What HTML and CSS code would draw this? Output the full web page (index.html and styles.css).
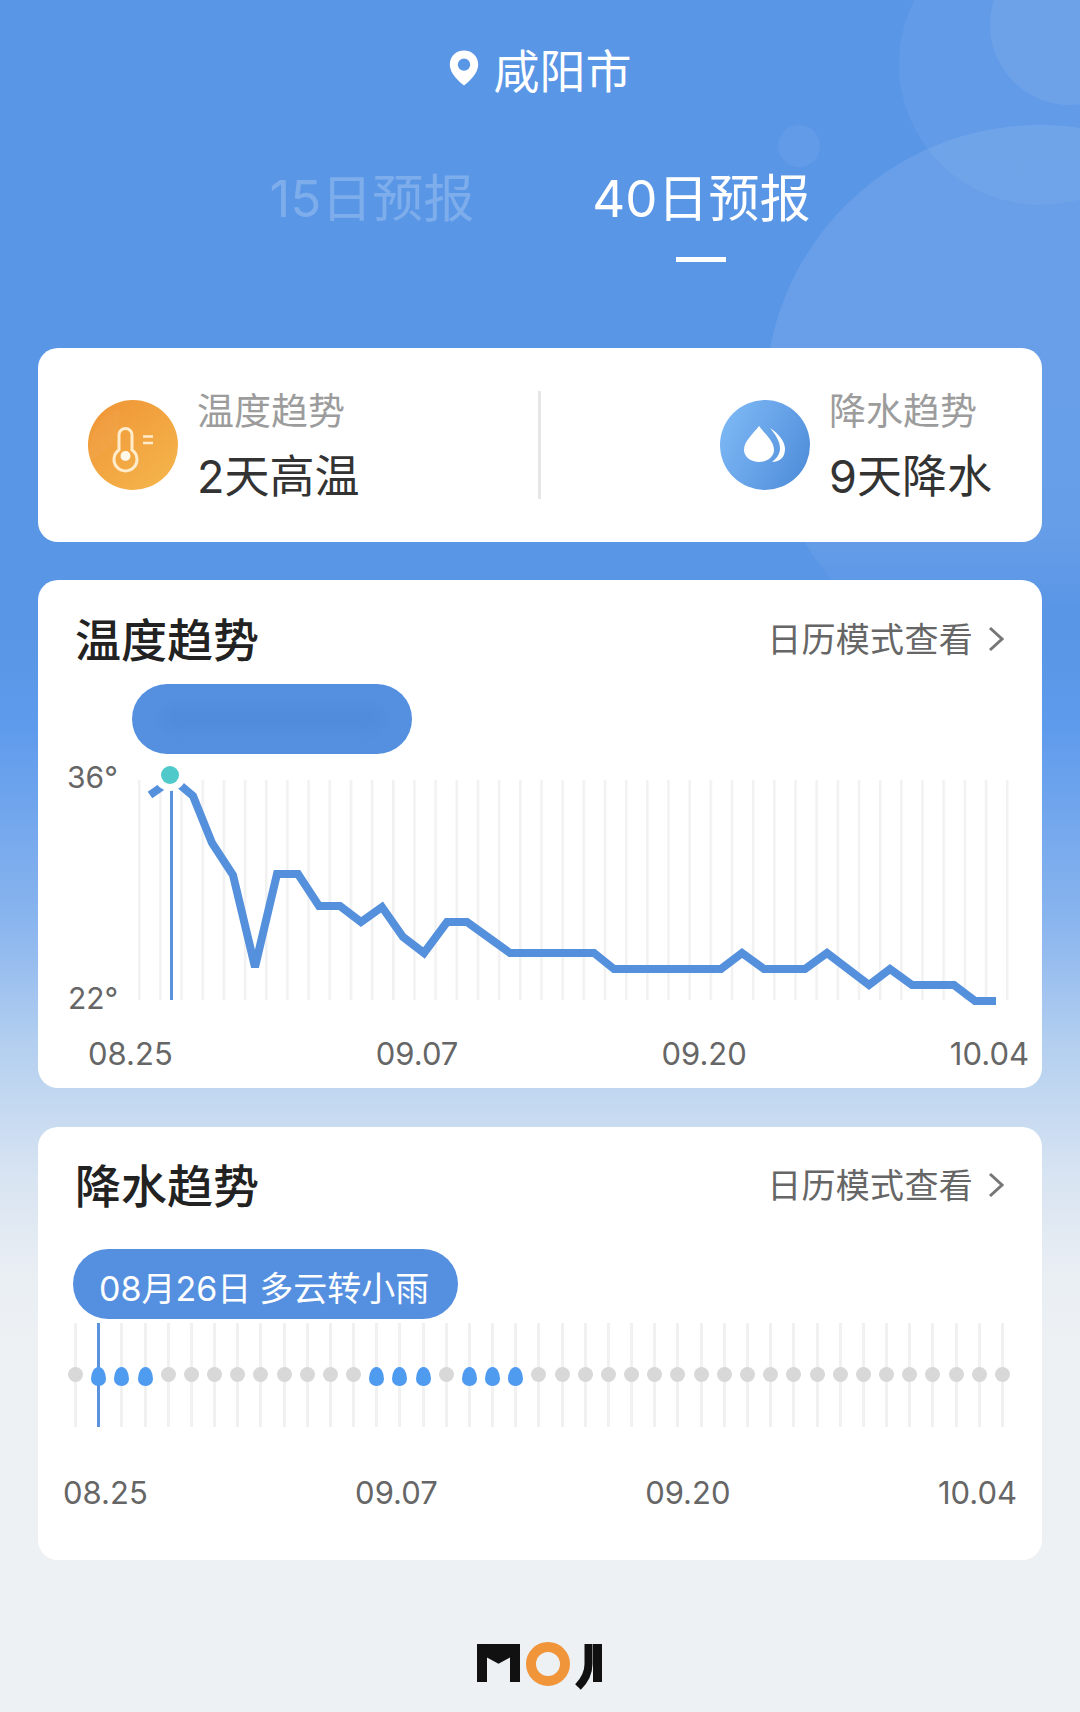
FILE: index.html
```html
<!DOCTYPE html>
<html lang="zh-CN">
<head>
  <meta charset="UTF-8" />
  <meta name="viewport" content="width=device-width, initial-scale=1.0"/>
  <title>40日预报</title>
  <link rel="stylesheet" href="styles.css">
</head>
<body>
  <div class="page">
    <svg class="bubbles" width="1080" height="700" viewBox="0 0 1080 700">
      <defs>
        <linearGradient id="bubble-fade" x1="0" y1="125" x2="0" y2="675" gradientUnits="userSpaceOnUse">
          <stop offset="0" stop-color="#fff" stop-opacity="0.09"/>
          <stop offset="0.72" stop-color="#fff" stop-opacity="0.08"/>
          <stop offset="0.88" stop-color="#fff" stop-opacity="0"/>
        </linearGradient>
      </defs>
      <circle cx="1040" cy="64" r="141" fill="#fff" opacity="0.05"/>
      <circle cx="1070" cy="25" r="80" fill="#fff" opacity="0.07"/>
      <circle cx="799" cy="146" r="21" fill="#fff" opacity="0.05"/>
      <circle cx="1040" cy="400" r="275" fill="url(#bubble-fade)"/>
    </svg>

    <div class="city">
      <svg class="pin" width="30" height="36" viewBox="0 0 30 36">
        <path fill-rule="evenodd" fill="#fff" d="M15 0.5C7 0.5 0.8 6.6 0.8 14.4 0.8 23.4 9.6 31 15 35.5 20.4 31 29.2 23.4 29.2 14.4 29.2 6.6 23 0.5 15 0.5ZM15 8.4a6.2 6.2 0 1 1 0 12.4a6.2 6.2 0 1 1 0-12.4Z"/>
      </svg>
      <span>咸阳市</span>
    </div>

    <div class="tabs">
      <div class="tab">15日预报</div>
      <div class="tab active">40日预报</div>
    </div>

    <div class="card summary">
      <div class="summary-item">
        <svg class="summary-icon" width="90" height="90" viewBox="0 0 90 90">
          <defs>
            <linearGradient id="hot" x1="0.1" y1="0" x2="0.9" y2="1">
              <stop offset="0" stop-color="#ef9536"/>
              <stop offset="1" stop-color="#f5b64c"/>
            </linearGradient>
          </defs>
          <circle cx="45" cy="45" r="45" fill="url(#hot)"/>
          <path d="M31 8A45 45 0 0 0 3 60C20 50 35 40 31 8Z" fill="#fff" opacity="0.04"/>
          <path fill="none" stroke="#ffeccb" stroke-width="3" d="M31 50V35a6.5 6.5 0 0 1 13 0V50a11.5 11.5 0 1 1-13 0Z"/>
          <circle cx="37.500" cy="56" r="5" fill="#fff7e8"/>
          <path stroke="#ffeccb" stroke-width="2.500" d="M55 36.500H65M55 43H65"/>
        </svg>
        <div class="summary-text">
          <div class="summary-label">温度趋势</div>
          <div class="summary-value">2天高温</div>
        </div>
      </div>
      <div class="summary-divider"></div>
      <div class="summary-item">
        <svg class="summary-icon" width="90" height="90" viewBox="0 0 90 90">
          <defs>
            <linearGradient id="wet" x1="0" y1="0.3" x2="1" y2="0.8">
              <stop offset="0" stop-color="#7cb7f4"/>
              <stop offset="1" stop-color="#4f8dda"/>
            </linearGradient>
          </defs>
          <circle cx="45" cy="45" r="45" fill="url(#wet)"/>
          <path fill="#fff" d="M39 26C33 34 24 41 24 50 24 57 31 62 39 62 47 62 54 57 54 50 54 41 45 34 39 26Z"/>
          <path fill="#fff" d="M50 28C58 33 65 41 65 49 65 57 60 62 52 62 57 58 60 54 60 48 60 41 55 34 50 28Z"/>
        </svg>
        <div class="summary-text">
          <div class="summary-label">降水趋势</div>
          <div class="summary-value">9天降水</div>
        </div>
      </div>
    </div>

    <div class="card trend">
      <div class="trend-head">
        <div class="trend-title">温度趋势</div>
        <div class="trend-link">日历模式查看
          <svg width="16" height="26" viewBox="0 0 16 26"><path d="M2 2L14 13L2 24" fill="none" stroke="#777" stroke-width="3"/></svg>
        </div>
      </div>
      <div class="pill pill-temp"><span class="smudge"></span></div>
      <svg class="temp-chart" width="1004" height="276" viewBox="0 0 1004 276">
        <defs>
          <pattern id="grid" patternUnits="userSpaceOnUse" x="138" y="0" width="21.17" height="10">
            <rect width="2.500" height="10" fill="#f1f1f1"/>
          </pattern>
        </defs>
        <g transform="translate(-38 -754)">
          <rect x="138" y="780" width="871" height="220" fill="url(#grid)"/>
          <text class="temp-axis" x="67" y="788">36°</text>
          <text class="temp-axis" x="68" y="1009">22°</text>
          <polyline class="temp-line" points="150,795 170,781 180,785 193,796 212,843 233,875 255,967 277,874 298,874 319,906 340,906 361,922 382,907 403,937 424,953 447,922 467,922 510,953 594,953 614,969 721,969 742,953 764,969 805,969 827,953 869,985 890,969 912,985 954,985 975,1001 996,1001"/>
          <rect x="170" y="780" width="3" height="220" fill="#5a92de"/>
          <circle cx="170" cy="775" r="16" fill="#fff"/>
          <circle cx="170" cy="775" r="9" fill="#4fc9c9"/>
        </g>
      </svg>
      <div class="dates dates-temp">
        <span>08.25</span><span>09.07</span><span>09.20</span><span>10.04</span>
      </div>
    </div>

    <div class="card trend rain">
      <div class="trend-head">
        <div class="trend-title">降水趋势</div>
        <div class="trend-link">日历模式查看
          <svg width="16" height="26" viewBox="0 0 16 26"><path d="M2 2L14 13L2 24" fill="none" stroke="#777" stroke-width="3"/></svg>
        </div>
      </div>
      <div class="pill pill-rain">08月26日<span class="pill-weather">多云转小雨</span></div>
      <div class="rain-row">
        <i></i><i class="wet now"></i><i class="wet"></i><i class="wet"></i><i></i><i></i><i></i><i></i><i></i><i></i><i></i><i></i><i></i>
        <i class="wet"></i><i class="wet"></i><i class="wet"></i><i></i><i class="wet"></i><i class="wet"></i><i class="wet"></i>
        <i></i><i></i><i></i><i></i><i></i><i></i><i></i><i></i><i></i><i></i><i></i><i></i><i></i><i></i><i></i><i></i><i></i><i></i><i></i><i></i><i></i>
      </div>
      <div class="dates dates-rain">
        <span>08.25</span><span>09.07</span><span>09.20</span><span>10.04</span>
      </div>
    </div>

    <div class="logo">
      <svg width="130" height="50" viewBox="0 0 130 50" role="img" aria-label="MOJI">
        <path d="M7 42V9H40V42" fill="none" stroke="#111" stroke-width="10"/>
        <path d="M7 9L23.500 18L40 9" fill="none" stroke="#111" stroke-width="10"/>
        <circle cx="73" cy="24" r="17" fill="none" stroke="#f0953a" stroke-width="10"/>
        <path d="M113.500 4V24C113.500 33 109 41 103 47" fill="none" stroke="#111" stroke-width="8"/>
        <path d="M122.500 4V42" fill="none" stroke="#111" stroke-width="9"/>
      </svg>
    </div>
  </div>
</body>
</html>
```

FILE: styles.css
```css
* {
  box-sizing: border-box;
}

body {
  margin: 0;
  font-family: "Inter", "Noto Sans CJK SC", "Noto Sans", sans-serif;
}

.page {
  position: relative;
  width: 1080px;
  height: 1712px;
  padding: 0 38px;
  overflow: hidden;
  background: linear-gradient(180deg, #5a96e6 0, #5a96e6 640px, #5f9bec 730px, #8ab5ee 923px, #b5d0f0 1050px, #d8e4f2 1178px, #e9eef3 1273px, #edf1f4 1350px, #edf1f4 100%);
}

.bubbles {
  position: absolute;
  top: 0;
  left: 0;
}

.city {
  position: relative;
  display: flex;
  justify-content: center;
  align-items: center;
  gap: 15px;
  height: 60px;
  margin-top: 38px;
  margin-bottom: 71px;
  color: #fff;
  font-size: 46px;
}

.tabs {
  position: relative;
  display: flex;
  justify-content: center;
  gap: 118px;
  height: 90px;
  margin-bottom: 89px;
  font-size: 51px;
  line-height: 60px;
  color: rgba(255, 255, 255, 0.22);
}

.tab {
  position: relative;
}

.tab.active {
  color: #fff;
}

.tab.active::after {
  content: "";
  position: absolute;
  left: 50%;
  top: 88px;
  width: 50px;
  height: 5px;
  margin-left: -25px;
  background: #fff;
}

.card {
  position: relative;
  background: #fff;
  border-radius: 20px;
}

.summary {
  display: flex;
  justify-content: space-between;
  align-items: center;
  height: 194px;
  padding: 0 50px;
}

.summary-item {
  display: flex;
  align-items: center;
  gap: 19px;
}

.summary-icon {
  display: block;
}

.summary-text {
  padding-top: 5px;
}

.summary-label {
  font-size: 37px;
  line-height: 48px;
  color: #9c9c9c;
}

.summary-value {
  margin-top: 11px;
  font-size: 45px;
  line-height: 60px;
  color: #333;
}

.summary-divider {
  width: 3px;
  height: 108px;
  background: #e6e6e6;
}

.trend {
  height: 508px;
  margin-top: 38px;
  padding-top: 27px;
}

.rain {
  height: 433px;
  margin-top: 39px;
  padding-top: 26px;
}

.trend-head {
  display: flex;
  justify-content: space-between;
  align-items: center;
  height: 60px;
  padding: 0 38px 0 37px;
}

.trend-title {
  font-size: 46px;
  font-weight: 500;
  color: #222;
}

.trend-link {
  display: flex;
  align-items: center;
  gap: 15px;
  font-size: 34px;
  letter-spacing: 0.3px;
  color: #666;
}

.trend-link svg {
  margin-top: 4px;
}

.pill {
  display: flex;
  align-items: center;
  height: 70px;
  border-radius: 35px;
  background: #5590e0;
  color: #fff;
}

.pill-temp {
  width: 280px;
  margin: 17px 0 0 94px;
  justify-content: center;
}

.smudge {
  width: 220px;
  height: 26px;
  border-radius: 10px;
  background: #518bdb;
  filter: blur(6px);
}

.pill-rain {
  width: 385px;
  margin: 36px 0 0 35px;
  padding: 5px 0 0 26px;
  font-size: 34px;
}

.pill-weather {
  margin-left: 8px;
}

.temp-chart {
  display: block;
}

.temp-axis {
  font-size: 30px;
  fill: #666;
}

.temp-line {
  fill: none;
  stroke: #5590dd;
  stroke-width: 8;
}

.dates {
  display: flex;
  justify-content: space-between;
  font-size: 31px;
  line-height: 40px;
  color: #666;
}

.dates-temp {
  margin-top: 4px;
  padding: 0 13px 0 50px;
}

.dates-rain {
  margin-top: 46px;
  padding: 0 25px;
}

.rain-row {
  display: flex;
  justify-content: space-between;
  height: 104px;
  margin-top: 4px;
  padding: 0 38px 0 36px;
}

/* one column of the rain strip: grey line with a day marker on it */
.rain-row i {
  position: relative;
  width: 3px;
  height: 104px;
  background: #f1f1f1;
}

.rain-row i::after {
  content: "";
  position: absolute;
  left: -6px;
  top: 44px;
  width: 15px;
  height: 15px;
  border-radius: 50%;
  background: #d8d8d8;
}

.rain-row i.wet::after {
  top: 44px;
  height: 19px;
  border-radius: 50% 50% 50% 50% / 65% 65% 38% 38%;
  background: #4f9bf0;
}

.rain-row i.now {
  background: #5a92de;
}

.logo {
  display: flex;
  justify-content: center;
  margin-top: 80px;
}
```
